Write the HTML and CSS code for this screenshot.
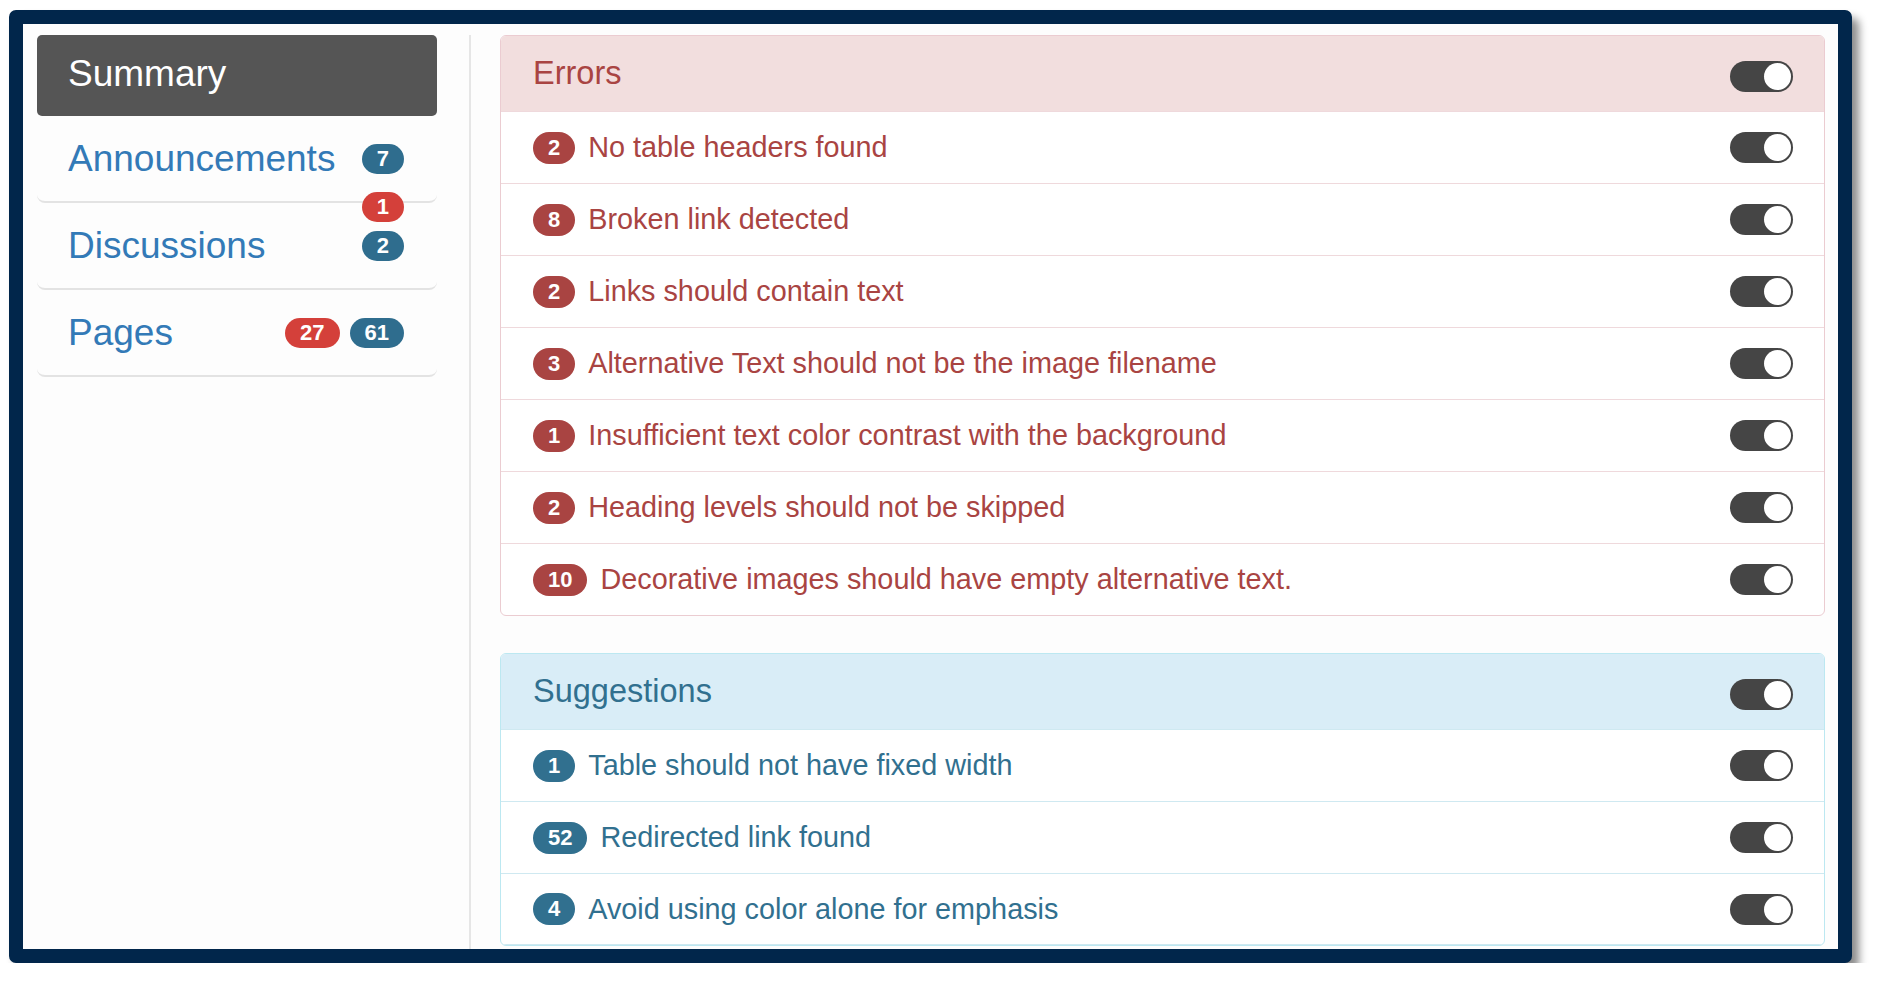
FILE: index.html
```html
<!DOCTYPE html>
<html lang="en">
<head>
<meta charset="utf-8">
<title>Accessibility report</title>
<link rel="stylesheet" href="styles.css">
</head>
<body>
<div class="frame">
  <aside class="sidebar">
    <div class="summary">Summary</div>
    <div class="nav-item">
      <span class="nav-label">Announcements</span>
      <span class="badges"><span class="pill pill-blue">7</span></span>
    </div>
    <div class="nav-item">
      <span class="nav-label">Discussions</span>
      <span class="badges stack">
        <span class="pill pill-red pill-over">1</span>
        <span class="pill pill-blue">2</span>
      </span>
    </div>
    <div class="nav-item">
      <span class="nav-label">Pages</span>
      <span class="badges"><span class="pill pill-red">27</span><span class="pill pill-blue">61</span></span>
    </div>
  </aside>
  <div class="divider"></div>
  <main class="main">
    <section class="panel panel-error">
      <div class="panel-head"><span class="panel-title">Errors</span><span class="toggle toggle-head"></span></div>
      <div class="row"><span class="count">2</span><span class="row-text">No table headers found</span><span class="toggle"></span></div>
      <div class="row"><span class="count">8</span><span class="row-text">Broken link detected</span><span class="toggle"></span></div>
      <div class="row"><span class="count">2</span><span class="row-text">Links should contain text</span><span class="toggle"></span></div>
      <div class="row"><span class="count">3</span><span class="row-text">Alternative Text should not be the image filename</span><span class="toggle"></span></div>
      <div class="row"><span class="count">1</span><span class="row-text">Insufficient text color contrast with the background</span><span class="toggle"></span></div>
      <div class="row"><span class="count">2</span><span class="row-text">Heading levels should not be skipped</span><span class="toggle"></span></div>
      <div class="row"><span class="count">10</span><span class="row-text">Decorative images should have empty alternative text.</span><span class="toggle"></span></div>
    </section>
    <section class="panel panel-info">
      <div class="panel-head"><span class="panel-title">Suggestions</span><span class="toggle toggle-head"></span></div>
      <div class="row"><span class="count">1</span><span class="row-text">Table should not have fixed width</span><span class="toggle"></span></div>
      <div class="row"><span class="count">52</span><span class="row-text">Redirected link found</span><span class="toggle"></span></div>
      <div class="row row-last"><span class="count">4</span><span class="row-text">Avoid using color alone for emphasis</span><span class="toggle"></span></div>
    </section>
  </main>
</div>
</body>
</html>
```

FILE: styles.css
```css
html, body {
  margin: 0;
  padding: 0;
  background: #ffffff;
}

body {
  font-family: "Liberation Sans", Arial, Helvetica, sans-serif;
}

.frame {
  margin: 10px 0 0 9px;
  width: 1843px;
  height: 953px;
  box-sizing: border-box;
  border: 14px solid #01264b;
  border-radius: 7px;
  background: #fdfdfd;
  overflow: hidden;
  display: flex;
  box-shadow: 7px 8px 9px rgba(0, 0, 0, 0.45);
}

.sidebar {
  width: 446px;
  flex: none;
  box-sizing: border-box;
  padding: 11px 32px 0 14px;
}

.summary {
  height: 81px;
  box-sizing: border-box;
  display: flex;
  align-items: center;
  padding: 0 0 3px 31px;
  background: #555555;
  color: #ffffff;
  border-radius: 5px;
  font-size: 37px;
}

.nav-item {
  height: 87px;
  box-sizing: border-box;
  display: flex;
  align-items: center;
  justify-content: space-between;
  padding: 0 33px 0 31px;
  border-bottom: 2px solid #e3e3e3;
  border-radius: 0 0 8px 8px;
}

.nav-label {
  color: #337ab7;
  font-size: 37px;
}

.badges {
  display: flex;
  gap: 10px;
}

.stack {
  position: relative;
}

.pill {
  display: inline-flex;
  align-items: center;
  justify-content: center;
  height: 30px;
  min-width: 12px;
  padding: 0 15px;
  border-radius: 15px;
  color: #ffffff;
  font-weight: bold;
  font-size: 22px;
}

.pill-blue {
  background: #2f6d8e;
}

.pill-red {
  background: #d4403a;
}

.pill-over {
  position: absolute;
  right: 0;
  bottom: calc(100% + 9px);
}

.divider {
  width: 2px;
  flex: none;
  margin-top: 11px;
  background: #e6e6e6;
}

.main {
  flex: 1;
  padding: 11px 13px 0 29px;
}

.panel {
  border: 1px solid;
  border-radius: 6px;
  overflow: hidden;
  background: #ffffff;
}

.panel + .panel {
  margin-top: 37px;
}

.panel-error {
  border-color: #ebccd1;
  color: #a94442;
}

.panel-info {
  border-color: #bce8f1;
  color: #31708f;
}

.panel-head {
  height: 75px;
  display: flex;
  align-items: center;
  justify-content: space-between;
  padding: 0 31px 0 32px;
}

.panel-error .panel-head {
  background: #f2dede;
}

.panel-info .panel-head {
  background: #d9edf7;
}

.panel-title {
  font-size: 32.5px;
}

.row {
  height: 72px;
  box-sizing: border-box;
  display: flex;
  align-items: center;
  padding: 0 31px 0 32px;
  border-top: 1px solid;
}

.panel-error .row {
  border-top-color: #efd9dc;
}

.panel-info .row {
  border-top-color: #cfe9f1;
}

.row-last {
  border-bottom: 1px solid #cfe9f1;
}

.count {
  display: inline-flex;
  align-items: center;
  justify-content: center;
  height: 32px;
  padding: 0 15px;
  border-radius: 16px;
  color: #ffffff;
  font-weight: bold;
  font-size: 22px;
}

.panel-error .count {
  background: #a94442;
}

.panel-info .count {
  background: #31708f;
}

.row-text {
  margin-left: 13px;
  font-size: 28.8px;
  flex: 1;
}

.toggle {
  position: relative;
  width: 63px;
  height: 31px;
  flex: none;
  border-radius: 16px;
  background: #454545;
}

.toggle::after {
  content: "";
  position: absolute;
  top: 2px;
  right: 2px;
  width: 27px;
  height: 27px;
  border-radius: 50%;
  background: #ffffff;
}

.toggle-head {
  margin-top: 5px;
}
```
